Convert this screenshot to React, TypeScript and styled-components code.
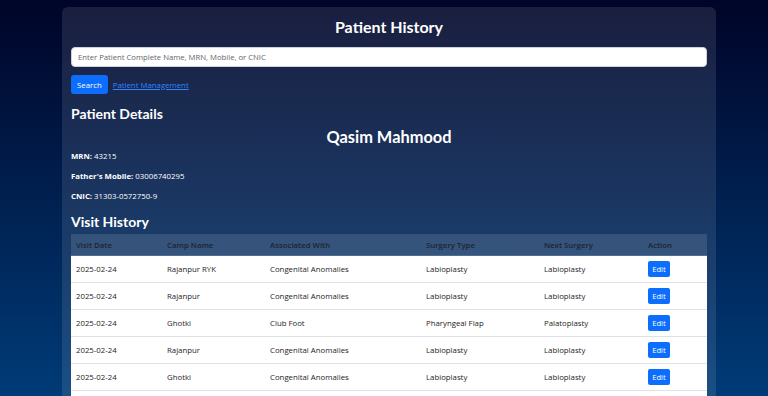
import styled, { createGlobalStyle } from 'styled-components'

const GlobalStyle = createGlobalStyle`
  html, body {
    margin: 0;
    padding: 0;
  }
  body {
    font-family: 'Open Sans', 'Noto Sans', sans-serif;
    background: linear-gradient(180deg, #000428 0px, #004e92 528px);
    background-repeat: no-repeat;
    background-color: #004e92;
    min-height: 100vh;
  }
`

interface Visit {
  date: string
  camp: string
  associated: string
  surgery: string
  next: string
}

const visits: Visit[] = [
  { date: '2025-02-24', camp: 'Rajanpur RYK', associated: 'Congenital Anomalies', surgery: 'Labioplasty', next: 'Labioplasty' },
  { date: '2025-02-24', camp: 'Rajanpur', associated: 'Congenital Anomalies', surgery: 'Labioplasty', next: 'Labioplasty' },
  { date: '2025-02-24', camp: 'Ghotki', associated: 'Club Foot', surgery: 'Pharyngeal Flap', next: 'Palatoplasty' },
  { date: '2025-02-24', camp: 'Rajanpur', associated: 'Congenital Anomalies', surgery: 'Labioplasty', next: 'Labioplasty' },
  { date: '2025-02-24', camp: 'Ghotki', associated: 'Congenital Anomalies', surgery: 'Labioplasty', next: 'Labioplasty' },
  { date: '2025-02-24', camp: 'Rajanpur', associated: 'Congenital Anomalies', surgery: 'Labioplasty', next: 'Labioplasty' }
]

const columns = [
  { label: 'Visit Date', width: 91 },
  { label: 'Camp Name', width: 103 },
  { label: 'Associated With', width: 156 },
  { label: 'Surgery Type', width: 118 },
  { label: 'Next Surgery', width: 104 },
  { label: 'Action', width: 64 }
]

const App: React.FC = () => {
  return (
    <Page>
      <GlobalStyle />
      <Card>
        <Title>Patient History</Title>
        <SearchInput type="text" placeholder="Enter Patient Complete Name, MRN, Mobile, or CNIC" />
        <ActionRow>
          <PrimaryButton>Search</PrimaryButton>
          <NavLink href="#">Patient Management</NavLink>
        </ActionRow>

        <SectionTitle $gap={10}>Patient Details</SectionTitle>
        <PatientName>Qasim Mahmood</PatientName>
        <InfoLine $gap={2}><b>MRN:</b> 43215</InfoLine>
        <InfoLine $gap={8}><b>Father's Mobile:</b> 03006740295</InfoLine>
        <InfoLine $gap={8}><b>CNIC:</b> 31303-0572750-9</InfoLine>

        <SectionTitle $gap={10}>Visit History</SectionTitle>
        <Table>
          <colgroup>
            {columns.map((col) => <col key={col.label} style={{ width: col.width }} />)}
          </colgroup>
          <thead>
            <tr>
              {columns.map((col) => <HeadCell key={col.label}>{col.label}</HeadCell>)}
            </tr>
          </thead>
          <tbody>
            {visits.map((visit, i) => (
              <Row key={i}>
                <Cell>{visit.date}</Cell>
                <Cell>{visit.camp}</Cell>
                <Cell>{visit.associated}</Cell>
                <Cell>{visit.surgery}</Cell>
                <Cell>{visit.next}</Cell>
                <Cell><EditButton>Edit</EditButton></Cell>
              </Row>
            ))}
          </tbody>
        </Table>
      </Card>
    </Page>
  )
}

const headingFont = "Lato, 'Open Sans', sans-serif"

const Page = styled.div`
  padding: 7px 0 20px 62px;
`

const Card = styled.div`
  width: 654px;
  box-sizing: border-box;
  padding: 9px 9px 12px;
  background: rgba(255, 255, 255, 0.1);
  border-radius: 6px;
  display: flex;
  flex-direction: column;
  color: #ffffff;
`

const Title = styled.h2`
  margin: 0;
  font-family: ${headingFont};
  font-size: 16px;
  line-height: 22px;
  font-weight: 700;
  text-align: center;
`

const SearchInput = styled.input`
  margin-top: 9px;
  height: 20px;
  box-sizing: border-box;
  width: 100%;
  border: 1px solid #ced4da;
  border-radius: 4px;
  padding: 0 6px;
  font-family: inherit;
  font-size: 7.7px;
  color: #212529;
  background: #ffffff;
  &::placeholder {
    color: #5f666d;
  }
`

const ActionRow = styled.div`
  margin-top: 8px;
  display: flex;
  align-items: center;
  gap: 5px;
`

const PrimaryButton = styled.button`
  height: 19px;
  padding: 0 6px;
  border: none;
  border-radius: 3px;
  background: #0d6efd;
  color: #ffffff;
  font-family: inherit;
  font-size: 7.8px;
  cursor: pointer;
`

const NavLink = styled.a`
  color: #2f84ff;
  font-size: 7.8px;
  text-decoration: underline;
`

const SectionTitle = styled.h3<{ $gap: number }>`
  margin: ${(props) => props.$gap}px 0 0;
  font-family: ${headingFont};
  font-size: 14px;
  line-height: 20px;
  font-weight: 700;
`

const PatientName = styled.h2`
  margin: 2px 0 0;
  font-family: ${headingFont};
  font-size: 16.4px;
  line-height: 22px;
  font-weight: 700;
  text-align: center;
`

const InfoLine = styled.p<{ $gap: number }>`
  margin: ${(props) => props.$gap}px 0 0;
  font-size: 7.8px;
  line-height: 12px;
  b {
    font-weight: 700;
  }
`

const Table = styled.table`
  margin-top: 2px;
  width: 100%;
  border-collapse: collapse;
  table-layout: fixed;
  font-size: 7.8px;
`

const HeadCell = styled.th`
  height: 21px;
  padding: 0 5px;
  text-align: left;
  font-weight: 600;
  color: #1c2433;
  background: rgba(255, 255, 255, 0.12);
  border-bottom: 1px solid rgba(255, 255, 255, 0.15);
`

const Row = styled.tr`
  background: #ffffff;
`

const Cell = styled.td`
  height: 26px;
  padding: 0 5px;
  color: #1e2226;
  border-bottom: 1px solid #dee2e6;
  vertical-align: middle;
`

const EditButton = styled.button`
  height: 16px;
  width: 22px;
  padding: 0;
  border: none;
  border-radius: 2px;
  background: #0d6efd;
  color: #ffffff;
  font-family: inherit;
  font-size: 7.6px;
  cursor: pointer;
`

export default App
